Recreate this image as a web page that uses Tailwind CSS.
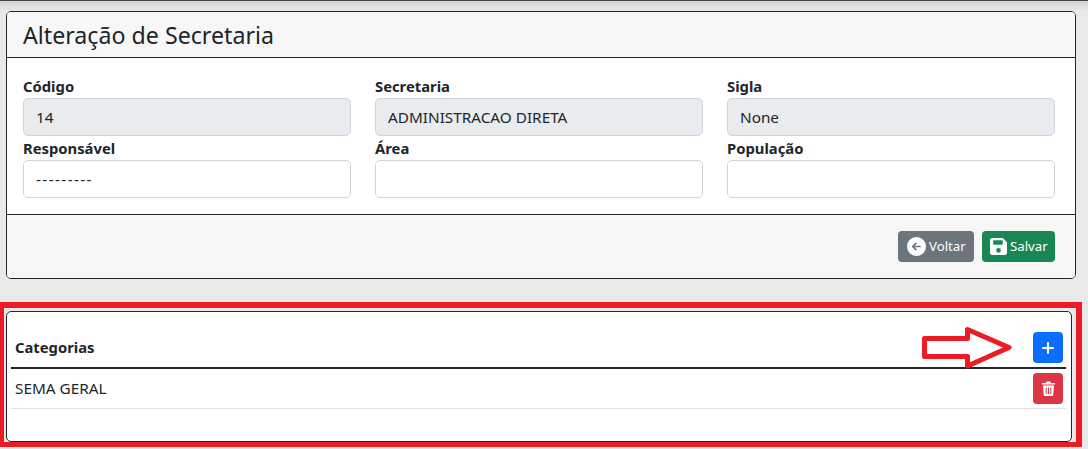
<!DOCTYPE html>
<html lang="pt">
<head>
<meta charset="utf-8">
<script src="https://cdn.jsdelivr.net/npm/@tailwindcss/browser@4"></script>
</head>
<body class="m-0 w-[1088px] h-[449px] overflow-hidden bg-[#e9e9e9] font-['Noto_Sans',sans-serif] text-[#212529]">
<div class="h-[11px] bg-gradient-to-b from-[#d2d2d2] to-[#e9e9e9] border-t border-[#444]"></div>
<section class="ml-[6px] w-[1070px] h-[268px] border border-[#212529] rounded-[5px] bg-white flex flex-col overflow-hidden">
  <header class="h-[46px] shrink-0 bg-[#f7f7f7] border-b border-[#212529] pl-4 pt-[2px] flex items-center">
    <h1 class="text-[23.2px] leading-none">Alteração de Secretaria</h1>
  </header>
  <div class="h-[157px] shrink-0 border-b border-[#212529] px-4 pt-[19px] grid grid-cols-[328px_328px_328px] gap-x-6 content-start">
    <div>
      <label class="block text-[14.8px] leading-[18px] font-bold">Código</label>
      <div class="h-[38px] mt-[3px] bg-[#e9ecef] border border-[#ced4da] rounded-[5px] pl-3 flex items-center text-[15.3px]">14</div>
    </div>
    <div>
      <label class="block text-[14.8px] leading-[18px] font-bold">Secretaria</label>
      <div class="h-[38px] mt-[3px] bg-[#e9ecef] border border-[#ced4da] rounded-[5px] pl-3 flex items-center text-[15.3px]">ADMINISTRACAO DIRETA</div>
    </div>
    <div>
      <label class="block text-[14.8px] leading-[18px] font-bold">Sigla</label>
      <div class="h-[38px] mt-[3px] bg-[#e9ecef] border border-[#ced4da] rounded-[5px] pl-3 flex items-center text-[15.3px]">None</div>
    </div>
    <div class="mt-[3px]">
      <label class="block text-[14.8px] leading-[18px] font-bold">Responsável</label>
      <div class="h-[38px] mt-[3px] bg-white border border-[#ced4da] rounded-[5px] pl-3 flex items-center text-[15.3px] tracking-[1.4px]">---------</div>
    </div>
    <div class="mt-[3px]">
      <label class="block text-[14.8px] leading-[18px] font-bold">Área</label>
      <div class="h-[38px] mt-[3px] bg-white border border-[#ced4da] rounded-[5px]"></div>
    </div>
    <div class="mt-[3px]">
      <label class="block text-[14.8px] leading-[18px] font-bold">População</label>
      <div class="h-[38px] mt-[3px] bg-white border border-[#ced4da] rounded-[5px]"></div>
    </div>
  </div>
  <footer class="flex-1 bg-[#f7f7f7] flex justify-end items-start pt-4 pr-[20px] gap-2">
    <button class="h-[31px] w-[76px] bg-[#6c757d] rounded-[4px] text-white text-[13.2px] flex items-center pl-[9px] gap-[3px]">
      <svg width="19" height="19" viewBox="0 0 16 16" fill="#fff"><path d="M8 0a8 8 0 1 0 0 16A8 8 0 0 0 8 0zm3.500 8.700H6.500l1.900 1.900-1 1L3.800 8l3.600-3.600 1 1-1.900 1.900h5z"/></svg>
      Voltar
    </button>
    <button class="h-[31px] w-[73px] bg-[#198754] rounded-[4px] text-white text-[13.2px] flex items-center pl-2 gap-[3px]">
      <svg width="17" height="17" viewBox="0 0 16 16" fill="#fff"><path fill-rule="evenodd" d="M2 0h10l4 4v10a2 2 0 0 1-2 2H2a2 2 0 0 1-2-2V2a2 2 0 0 1 2-2zm1 2.500v3.200c0 .4.300.7.700.7h7.600c.4 0 .7-.3.7-.7V2.500c0-.3-.2-.5-.5-.5H3.500c-.3 0-.5.2-.5.5zM8 9.500a2.200 2.200 0 1 0 0 4.400 2.200 2.200 0 0 0 0-4.400z"/></svg>
      Salvar
    </button>
  </footer>
</section>
<div class="relative mt-[23px] w-[1082px] h-[145px] border-t-[6px] border-r-[6px] border-b-[5px] border-l-[4px] border-[#ed1c24] pt-[3px] pl-[2px]">
  <section class="w-[1066px] h-[131px] border border-[#212529] rounded-[5px] bg-white pl-[4px] pr-[8px] pt-[19px]">
    <div class="h-[38px] -mr-[3px] pr-[3px] border-b-2 border-[#212529] flex items-end justify-between pb-[10px] pl-[4px]">
      <h2 class="text-[14.8px] leading-[20px] font-bold">Categorias</h2>
      <button class="w-[30px] h-[31px] bg-[#0d6efd] rounded-[4px] flex items-center justify-center mb-[-7px] translate-y-[-1px]">
        <svg width="14" height="14" viewBox="0 0 14 14" stroke="#fff" stroke-width="2" stroke-linecap="round"><path d="M7 2v10M2 7h10"/></svg>
      </button>
    </div>
    <div class="h-[40px] -mr-[3px] pr-[3px] border-b border-[#dee2e6] flex items-center justify-between pl-[4px]">
      <span class="text-[15.3px]">SEMA GERAL</span>
      <button class="w-[30px] h-[31px] bg-[#dc3545] rounded-[4px] flex items-center justify-center">
        <svg width="13" height="15" viewBox="0 0 13 15" fill="#fff"><path fill-rule="evenodd" d="M0 2h4l.6-1.500h3.800L9 2h4v1.500H0zM1 4.500h11l-.7 9.300c0 .7-.6 1.200-1.200 1.200H2.900c-.6 0-1.200-.5-1.200-1.200zM3.700 6.500v6.500h1V6.500zm2.300 0v6.500h1V6.500zm2.300 0v6.500h1V6.500z"/></svg>
      </button>
    </div>
  </section>
  <svg class="absolute left-[918px] top-[17px]" width="96" height="46" viewBox="0 0 96 46" fill="none" stroke="#ed1c24" stroke-width="5" stroke-linejoin="round"><path d="M2.500 13.500H45.500V4.500L87 22.500L45.500 41V31.500H2.500z"/></svg>
</div>
</body>
</html>
